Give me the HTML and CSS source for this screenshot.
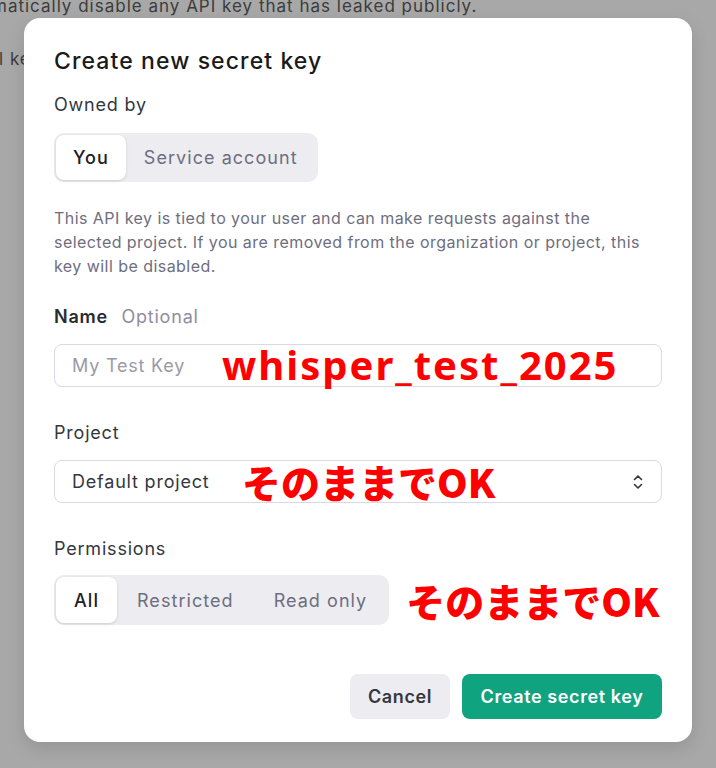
FILE: index.html
```html
<!DOCTYPE html>
<html lang="ja">
<head>
<meta charset="utf-8">
<title>Create new secret key</title>
<link rel="stylesheet" href="styles.css">
</head>
<body>
<div class="page">
  <p class="bg-line bg-line-1">matically disable any API key that has leaked publicly.</p>
  <p class="bg-line bg-line-2">l key</p>
</div>
<div class="modal" role="dialog">
  <h1 class="title">Create new secret key</h1>
  <div class="label label-owned">Owned by</div>
  <div class="seg seg-owned">
    <span class="seg-item active">You</span>
    <span class="seg-item">Service account</span>
  </div>
  <p class="desc">This API key is tied to your user and can make requests against the selected project. If you are removed from the organization or project, this key will be disabled.</p>
  <div class="label label-name">Name <span class="optional">Optional</span></div>
  <div class="field field-name">
    <span class="placeholder">My Test Key</span>
    <span class="note note-name">whisper_test_2025</span>
  </div>
  <div class="label label-project">Project</div>
  <div class="field field-project">
    <span class="value">Default project</span>
    <span class="note note-project">そのままでOK</span>
    <svg class="chev" width="10" height="16" viewBox="0 0 10 16" aria-hidden="true"><path d="M1.5 5.5 L5 2 L8.5 5.5 M1.5 10.5 L5 14 L8.5 10.5" fill="none" stroke="#353740" stroke-width="1.6" stroke-linecap="round" stroke-linejoin="round"/></svg>
  </div>
  <div class="label label-perm">Permissions</div>
  <div class="perm-row">
    <div class="seg seg-perm">
      <span class="seg-item active">All</span>
      <span class="seg-item">Restricted</span>
      <span class="seg-item">Read only</span>
    </div>
    <span class="note note-perm">そのままでOK</span>
  </div>
  <div class="actions">
    <button class="btn btn-cancel">Cancel</button>
    <button class="btn btn-primary">Create secret key</button>
  </div>
</div>
</body>
</html>
```
FILE: styles.css
```css
html, body {
  margin: 0;
  padding: 0;
}
body {
  width: 716px;
  height: 768px;
  background: #a8a8a8;
  font-family: Inter, "Noto Sans", "Liberation Sans", sans-serif;
  overflow: hidden;
  position: relative;
}
.bg-line {
  margin: 0;
  color: #3c3c3c;
  font-size: 17px;
  line-height: 22px;
  letter-spacing: 1px;
  white-space: nowrap;
}
.bg-line-1 {
  margin-top: -5px;
  margin-left: -8px;
}
.bg-line-2 {
  margin-top: 31px;
  margin-left: -1px;
}
.modal {
  position: absolute;
  top: 18px;
  left: 24px;
  width: 668px;
  height: 724px;
  box-sizing: border-box;
  padding: 29px 30px 23px;
  background: #ffffff;
  border-radius: 16px;
  box-shadow: 0 6px 18px rgba(0, 0, 0, 0.12);
  color: #202123;
  letter-spacing: 0.8px;
}
.title {
  margin: 0;
  font-size: 23px;
  line-height: 28px;
  font-weight: 500;
  color: #1a1a1a;
  letter-spacing: 1.1px;
}
.label {
  font-size: 18px;
  line-height: 24px;
  color: #353740;
  font-weight: 400;
}
.label-owned { margin-top: 18px; }
.label-name { margin-top: 27px; font-weight: 600; color: #2a2b32; }
.label-project { margin-top: 34px; }
.label-perm { margin-top: 34px; }
.optional {
  color: #8e8ea0;
  font-weight: 400;
  margin-left: 8px;
}
.seg {
  display: inline-flex;
  padding: 2px;
  background: #ececf1;
  border-radius: 10px;
  box-sizing: border-box;
}
.seg-owned {
  margin-top: 16px;
  height: 49px;
}
.seg-item {
  display: flex;
  align-items: center;
  padding: 0 20px;
  font-size: 18px;
  letter-spacing: 1.05px;
  color: #6e6e80;
  border-radius: 8px;
}
.seg-owned .seg-item {
  padding: 0 18px;
}
.seg-item.active {
  background: #ffffff;
  color: #202123;
  font-weight: 500;
  box-shadow: 0 1px 3px rgba(0, 0, 0, 0.14);
}
.seg .seg-item.active {
  padding: 0 17px;
}
.seg-perm .seg-item.active {
  padding: 0 18px;
}
.desc {
  margin: 24px 0 0;
  font-size: 16px;
  line-height: 24px;
  color: #6e6e80;
  max-width: 596px;
  letter-spacing: 0.45px;
}
.field {
  position: relative;
  height: 43px;
  box-sizing: border-box;
  border: 1px solid #d9d9e3;
  border-radius: 8px;
  display: flex;
  align-items: center;
  padding: 0 17px;
  font-size: 18px;
}
.field-name { margin-top: 15px; }
.field-project { margin-top: 15px; }
.placeholder { color: #9a9aa6; }
.value { color: #353740; }
.chev {
  margin-left: auto;
  margin-right: 1px;
}
.note {
  color: #ff0000;
  font-weight: 900;
  white-space: nowrap;
  letter-spacing: 0;
}
.note-name {
  position: absolute;
  left: 167px;
  top: -6px;
  font-family: "Noto Sans", sans-serif;
  font-weight: 700;
  font-size: 40px;
  line-height: 52px;
  letter-spacing: 2px;
}
.note-project {
  position: absolute;
  left: 187px;
  top: -6px;
  font-family: "Noto Sans CJK JP", sans-serif;
  font-size: 39px;
  line-height: 52px;
}
.perm-row {
  margin-top: 14px;
  display: flex;
  align-items: center;
}
.seg-perm {
  height: 50px;
}
.note-perm {
  margin-left: 17px;
  font-family: "Noto Sans CJK JP", sans-serif;
  font-size: 39px;
  line-height: 50px;
}
.actions {
  margin-top: 49px;
  display: flex;
  justify-content: flex-end;
  gap: 12px;
}
.btn {
  height: 45px;
  border: none;
  border-radius: 8px;
  font-family: Inter, "Noto Sans", sans-serif;
  font-size: 18px;
  font-weight: 600;
  letter-spacing: 0.6px;
  padding: 0;
}
.btn-cancel {
  background: #ececf1;
  color: #353740;
  width: 100px;
}
.btn-primary {
  background: #10a37f;
  color: #ffffff;
  width: 200px;
}
```
